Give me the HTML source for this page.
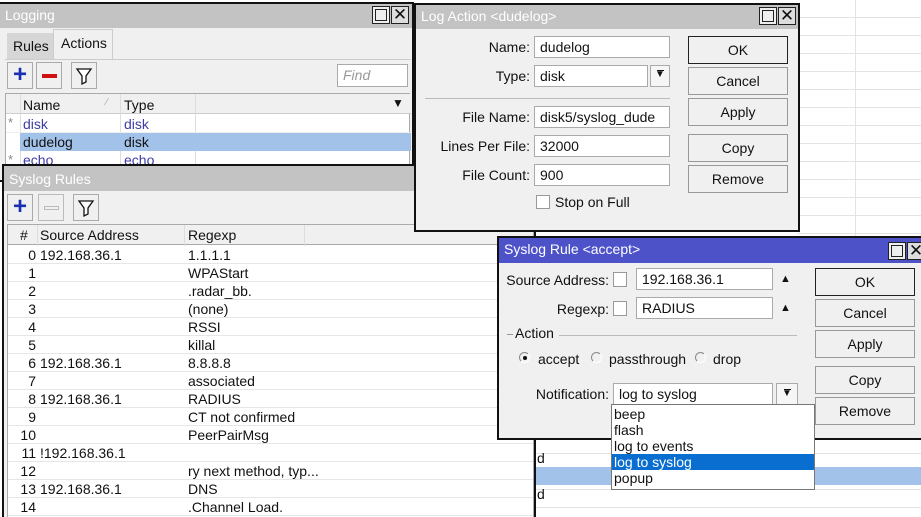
<!DOCTYPE html>
<html style="width:921px;height:517px;overflow:hidden"><head><meta charset="utf-8"><style>
*{box-sizing:border-box;margin:0;padding:0}
body{width:921px;height:517px;overflow:hidden;position:relative;background:#fff;font-family:"Liberation Sans",Arial,sans-serif;font-size:13px;color:#111}
.a{position:absolute}
.win{position:absolute;background:#f0f0f0;border:2px solid #111}
.tb{position:absolute;left:0;right:0;top:0;height:24px;background:#c3c3c3;color:#fff;font-size:14px;padding:3px 5px}
.tbb{background:#4d52c9}
.wb{position:absolute;top:3px;width:18px;height:18px;border:1px solid #222;background:#ddd}
.inp{position:absolute;background:#fff;border:1px solid #aaa;height:22px;padding:2px 5px;font-size:14px}
.btn{position:absolute;width:100px;height:28px;border:1px solid #999;background:#f0f0f0;text-align:center;line-height:26px;font-size:14px}
.lbl{position:absolute;text-align:right;font-size:14px}
.dd{position:absolute;border:1px solid #aaa;background:#f6f6f6;text-align:center}
</style></head><body>
<div class="a" style="left:798px;top:0;width:123px;height:240px;background:repeating-linear-gradient(#fff 0 17px,#e3e3e3 17px 18px)"></div>
<div class="a" style="left:855px;top:0;width:1px;height:236px;background:#e3e3e3"></div>
<div class="a" style="left:535px;top:440px;width:386px;height:77px;background:repeating-linear-gradient(#fff 0 17px,#e3e3e3 17px 18px);background-position:0 -4px"></div>
<div class="a" style="left:535px;top:467px;width:386px;height:18px;background:#a3c2ea"></div>
<div class="a" style="left:537px;top:450px;font-size:14px">d</div>
<div class="a" style="left:537px;top:486px;font-size:14px">d</div>
<div class="a" style="left:533px;top:440px;width:3px;height:77px;border-left:1px solid #888;border-right:1px solid #888"></div>

<!-- Logging window -->
<div class="win" style="left:-2px;top:2px;width:416px;height:180px">
 <div class="tb" style="height:24px">Logging</div>
 <div class="wb" style="left:372px;top:2px;background:#eee"></div><div class="a" style="left:375px;top:5px;width:12px;height:12px;border:1px solid #222"></div>
 <div class="wb" style="left:391px;top:2px;font-size:17px;line-height:15px;text-align:center;color:#111">✕</div>
 <div class="a" style="left:7px;top:29px;width:46px;height:26px;background:#d6d6d6;padding:5px 6px;font-size:14px">Rules</div>
 <div class="a" style="left:53px;top:25px;width:60px;height:30px;background:#f0f0f0;border:1px solid #ccc;border-bottom:none;padding:5px 7px;font-size:14px">Actions</div>
 <div class="a" style="left:5px;top:55px;width:406px;height:1px;background:#ccc"></div>
 <div class="a" style="left:7px;top:58px;width:26px;height:27px;border:1px solid #aaa;color:#1a2fb0;font-size:24px;font-weight:bold;text-align:center;line-height:24px">+</div>
 <div class="a" style="left:36px;top:58px;width:26px;height:27px;border:1px solid #aaa"><div class="a" style="left:5px;top:11px;width:15px;height:4px;background:#d01010"></div></div>
 <div class="a" style="left:71px;top:58px;width:26px;height:27px;border:1px solid #aaa"><svg width="24" height="25"><path d="M5 6h14l-5 7v6l-4 2v-8z" fill="#fff" stroke="#111" stroke-width="1.3"/></svg></div>
 <div class="a" style="left:337px;top:60px;width:71px;height:23px;background:#fff;border:1px solid #aaa;color:#999;font-style:italic;padding:2px 5px;font-size:14px">Find</div>
 <div class="a" style="left:5px;top:89px;width:405px;height:90px;background:#fff;border:1px solid #aaa">
  <div class="a" style="left:0;top:0;width:405px;height:20px;background:#f0f0f0;border-bottom:1px solid #ccc"></div>
  <div class="a" style="left:14px;top:0;width:1px;height:90px;background:#ddd"></div>
  <div class="a" style="left:114px;top:0;width:1px;height:90px;background:#ddd"></div>
  <div class="a" style="left:189px;top:0;width:1px;height:90px;background:#ddd"></div>
  <div class="a" style="left:17px;top:3px;font-size:14px">Name</div><div class="a" style="left:100px;top:3px;color:#aaa;font-size:10px">⁄</div>
  <div class="a" style="left:118px;top:3px;font-size:14px">Type</div>
  <div class="a" style="left:386px;top:2px;font-size:12px">▼</div>
  <div class="a" style="left:0;top:21px;width:405px;height:18px;border-bottom:1px solid #eee"></div>
  <div class="a" style="left:14px;top:39px;width:391px;height:18px;background:#a3c2ea"></div>
  <div class="a" style="left:2px;top:21px;color:#888">*</div><div class="a" style="left:17px;top:22px;color:#3d3da8;font-size:14px">disk</div><div class="a" style="left:118px;top:22px;color:#3d3da8;font-size:14px">disk</div>
  <div class="a" style="left:17px;top:40px;font-size:14px">dudelog</div><div class="a" style="left:118px;top:40px;font-size:14px">disk</div>
  <div class="a" style="left:2px;top:58px;color:#888">*</div><div class="a" style="left:17px;top:58px;color:#3d3da8;font-size:14px">echo</div><div class="a" style="left:118px;top:58px;color:#3d3da8;font-size:14px">echo</div>
 </div>
</div>

<!-- Syslog Rules window -->
<div class="win" style="left:2px;top:164px;width:534px;height:360px">
 <div class="tb" style="height:25px;padding-top:5px">Syslog Rules</div>
 <div class="a" style="left:3px;top:28px;width:26px;height:27px;border:1px solid #aaa;color:#1a2fb0;font-size:24px;font-weight:bold;text-align:center;line-height:24px">+</div>
 <div class="a" style="left:34px;top:28px;width:26px;height:27px;border:1px solid #bbb"><div class="a" style="left:5px;top:11px;width:15px;height:4px;border:1px solid #bbb"></div></div>
 <div class="a" style="left:69px;top:28px;width:26px;height:27px;border:1px solid #aaa"><svg width="24" height="25"><path d="M5 6h14l-5 7v6l-4 2v-8z" fill="#fff" stroke="#111" stroke-width="1.3"/></svg></div>
 <div class="a" style="left:3px;top:58px;width:527px;height:300px;background:#fff;border:1px solid #aaa">
  <div class="a" style="left:0;top:0;right:0;height:20px;background:#f0f0f0;border-bottom:1px solid #aaa"></div>
  <div class="a" style="left:29px;top:0;width:1px;height:300px;background:#ddd"></div>
  <div class="a" style="left:176px;top:0;width:1px;height:300px;background:#ddd"></div>
  <div class="a" style="left:296px;top:0;width:1px;height:300px;background:#ddd"></div>
  <div class="a" style="left:12px;top:2px;font-size:14px">#</div>
  <div class="a" style="left:32px;top:2px;font-size:14px">Source Address</div>
  <div class="a" style="left:180px;top:2px;font-size:14px">Regexp</div>
  <div class="a" style="left:0;top:21px;right:0;height:290px;background:repeating-linear-gradient(#fff 0 17px,#e6e6e6 17px 18px)"></div>
  <div class="a" style="left:0;top:21px;width:28px;text-align:right;line-height:18px;font-size:14px">0<br>1<br>2<br>3<br>4<br>5<br>6<br>7<br>8<br>9<br>10<br>11<br>12<br>13<br>14</div>
  <div class="a" style="left:32px;top:21px;line-height:18px;font-size:14px">192.168.36.1<br><br><br><br><br><br>192.168.36.1<br><br>192.168.36.1<br><br><br>!192.168.36.1<br><br>192.168.36.1</div>
  <div class="a" style="left:180px;top:21px;line-height:18px;font-size:14px">1.1.1.1<br>WPAStart<br>.radar_bb.<br>(none)<br>RSSI<br>killal<br>8.8.8.8<br>associated<br>RADIUS<br>CT not confirmed<br>PeerPairMsg<br>&nbsp;<br>ry next method, typ...<br>DNS<br>.Channel Load.</div>
 </div>
</div>

<!-- Log Action window -->
<div class="win" style="left:414px;top:3px;width:386px;height:229px">
 <div class="tb" style="height:24px">Log Action &lt;dudelog&gt;</div>
 <div class="wb" style="left:343px;top:2px;background:#eee"></div><div class="a" style="left:346px;top:5px;width:12px;height:12px;border:1px solid #222"></div>
 <div class="wb" style="left:362px;top:2px;font-size:17px;line-height:15px;text-align:center">✕</div>
 <div class="lbl" style="left:0;width:114px;top:34px">Name:</div><div class="inp" style="left:118px;top:31px;width:136px">dudelog</div>
 <div class="lbl" style="left:0;width:114px;top:63px">Type:</div><div class="inp" style="left:118px;top:60px;width:114px">disk</div>
 <div class="dd" style="left:234px;top:60px;width:20px;height:22px;font-size:10px;line-height:18px">▼<div class="a" style="left:6px;top:4px;width:7px;height:1px;background:#111"></div></div>
 <div class="a" style="left:9px;top:93px;width:245px;height:1px;background:#bbb"></div>
 <div class="lbl" style="left:0;width:114px;top:104px">File Name:</div><div class="inp" style="left:118px;top:101px;width:136px">disk5/syslog_dude</div>
 <div class="lbl" style="left:0;width:114px;top:133px">Lines Per File:</div><div class="inp" style="left:118px;top:130px;width:136px">32000</div>
 <div class="lbl" style="left:0;width:114px;top:162px">File Count:</div><div class="inp" style="left:118px;top:159px;width:136px">900</div>
 <div class="a" style="left:120px;top:190px;width:14px;height:14px;background:#fff;border:1px solid #999"></div>
 <div class="a" style="left:139px;top:189px;font-size:14px">Stop on Full</div>
 <div class="btn" style="left:272px;top:31px;border:1px solid #222">OK</div>
 <div class="btn" style="left:272px;top:62px">Cancel</div>
 <div class="btn" style="left:272px;top:93px">Apply</div>
 <div class="btn" style="left:272px;top:129px">Copy</div>
 <div class="btn" style="left:272px;top:160px">Remove</div>
</div>

<!-- Syslog Rule window -->
<div class="win" style="left:497px;top:236px;width:430px;height:204px">
 <div class="tb tbb" style="height:25px">Syslog Rule &lt;accept&gt;</div>
 <div class="wb" style="left:389px;top:4px;background:#eee"></div><div class="a" style="left:392px;top:7px;width:12px;height:12px;border:1px solid #222"></div>
 <div class="wb" style="left:408px;top:4px;font-size:17px;line-height:15px;text-align:center">✕</div>
 <div class="lbl" style="left:0;width:110px;top:34px">Source Address:</div>
 <div class="a" style="left:114px;top:34px;width:14px;height:15px;background:#fff;border:1px solid #999"></div>
 <div class="inp" style="left:137px;top:30px;width:137px">192.168.36.1</div>
 <div class="a" style="left:281px;top:35px;font-size:11px">▲</div>
 <div class="lbl" style="left:0;width:110px;top:63px">Regexp:</div>
 <div class="a" style="left:114px;top:63px;width:14px;height:15px;background:#fff;border:1px solid #999"></div>
 <div class="inp" style="left:137px;top:59px;width:137px">RADIUS</div>
 <div class="a" style="left:281px;top:64px;font-size:11px">▲</div>
 <div class="a" style="left:8px;top:96px;width:6px;height:1px;background:#999"></div>
 <div class="a" style="left:16px;top:87px;font-size:14px">Action</div>
 <div class="a" style="left:60px;top:97px;width:238px;height:1px;background:#bbb"></div>
 <div class="a" style="left:20px;top:114px;width:11px;height:11px;border-radius:50%;border:1px solid #888;border-right-color:#fff;border-bottom-color:#fff"></div><div class="a" style="left:24px;top:118px;width:4px;height:4px;border-radius:50%;background:#111"></div>
 <div class="a" style="left:39px;top:113px;font-size:14px">accept</div>
 <div class="a" style="left:92px;top:114px;width:11px;height:11px;border-radius:50%;border:1px solid #888;border-right-color:#fff;border-bottom-color:#fff"></div>
 <div class="a" style="left:110px;top:113px;font-size:14px">passthrough</div>
 <div class="a" style="left:196px;top:114px;width:11px;height:11px;border-radius:50%;border:1px solid #888;border-right-color:#fff;border-bottom-color:#fff"></div>
 <div class="a" style="left:214px;top:113px;font-size:14px">drop</div>
 <div class="lbl" style="left:0;width:110px;top:148px">Notification:</div>
 <div class="inp" style="left:114px;top:145px;width:160px">log to syslog</div>
 <div class="dd" style="left:277px;top:145px;width:22px;height:22px;font-size:10px;line-height:20px">▼<div class="a" style="left:7px;top:5px;width:7px;height:1px;background:#111"></div></div>
 <div class="btn" style="left:316px;top:30px;border:1px solid #222">OK</div>
 <div class="btn" style="left:316px;top:61px">Cancel</div>
 <div class="btn" style="left:316px;top:92px">Apply</div>
 <div class="btn" style="left:316px;top:128px">Copy</div>
 <div class="btn" style="left:316px;top:159px">Remove</div>
</div>

<div class="a" style="left:611px;top:404px;width:204px;height:86px;background:#fff;border:1px solid #777;font-size:14px;line-height:16px">
 <div style="padding:1px 2px 0">beep</div>
 <div style="padding:0 2px">flash</div>
 <div style="padding:0 2px">log to events</div>
 <div style="padding:0 2px;background:#0a6ed1;color:#fff">log to syslog</div>
 <div style="padding:0 2px">popup</div>
</div>
</body></html>
